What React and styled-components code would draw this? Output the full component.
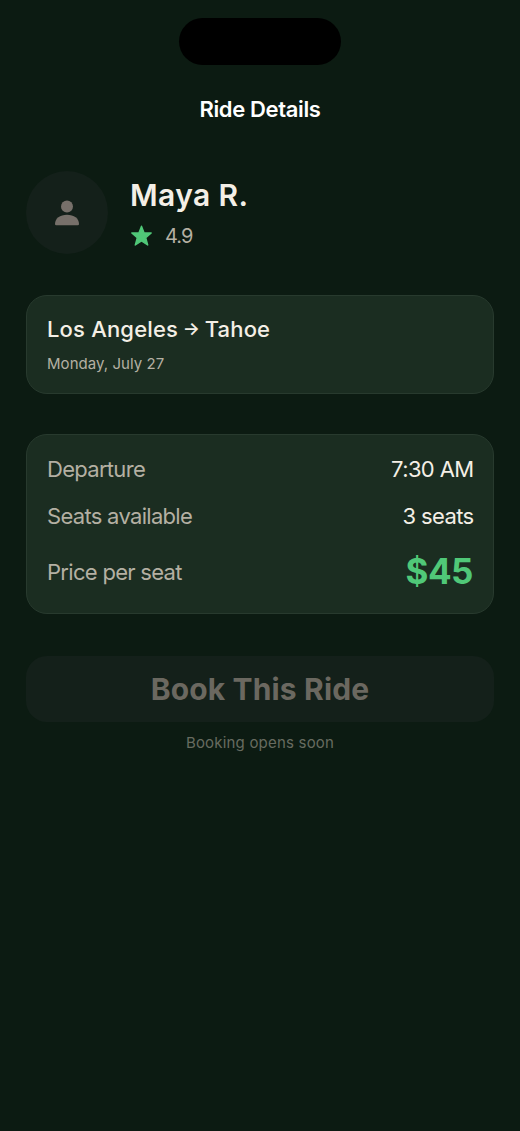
import React from 'react';
import styled, { createGlobalStyle } from 'styled-components';

const Global = createGlobalStyle`
  * { box-sizing: border-box; }
  body { margin: 0; background: #0c1b12; }
`;

const Screen = styled.main`
  width: 520px;
  height: 1131px;
  padding: 18px 26px 0;
  background: #0c1b12;
  color: #f4efe6;
  font-family: Inter, sans-serif;
  display: flex;
  flex-direction: column;
  overflow: hidden;
`;

const Island = styled.div`
  width: 162px;
  height: 47px;
  border-radius: 24px;
  background: #000;
  align-self: center;
`;

const Title = styled.h1`
  margin: 30px 0 0;
  text-align: center;
  font-size: 22px;
  line-height: 28px;
  font-weight: 600;
  letter-spacing: -0.36px;
  color: #fff;
`;

const Driver = styled.section`
  display: flex;
  align-items: center;
  gap: 22px;
  margin-top: 48px;
`;

const Avatar = styled.div`
  width: 82px;
  height: 83px;
  border-radius: 50%;
  background: #14201a;
  display: grid;
  place-items: center;
`;

const DriverName = styled.h2`
  margin: 0;
  font-size: 30px;
  line-height: 38px;
  font-weight: 600;
  letter-spacing: 0.4px;
`;

const Rating = styled.div`
  display: flex;
  align-items: center;
  gap: 12px;
  margin-top: 9px;
  font-size: 20px;
  line-height: 26px;
  letter-spacing: -0.9px;
  color: #b4b0a3;
`;

const Card = styled.section`
  border: 1px solid #283a2e;
  border-radius: 21px;
  background: #1b2d21;
  padding: 20px;
`;

const RouteCard = styled(Card)`
  height: 99px;
  padding-top: 19px;
  margin-top: 41px;
`;

const Route = styled.h3`
  display: flex;
  align-items: center;
  margin: 0;
  font-size: 22px;
  line-height: 28px;
  font-weight: 500;
  letter-spacing: 0.18px;
`;

const Arrow = styled.span`
  width: 26.5px;
  text-align: center;
  font-size: 18px;
  font-weight: 600;
`;

const RideDate = styled.p`
  margin: 11px 0 0;
  font-size: 15px;
  line-height: 20px;
  letter-spacing: 0.05px;
  color: #b4b0a3;
`;

const DetailsCard = styled(Card)`
  height: 180px;
  margin-top: 40px;
`;

const Row = styled.div`
  display: flex;
  justify-content: space-between;
  align-items: center;
  height: ${({ $height }) => $height}px;
`;

const Label = styled.span`
  font-size: 22px;
  letter-spacing: -0.7px;
  color: #b4b0a3;
`;

const Value = styled.span`
  font-size: 22px;
  letter-spacing: -0.6px;
  margin-right: -0.6px;
`;

const Price = styled.strong`
  padding-bottom: 2px;
  font-size: 35px;
  font-weight: 700;
  letter-spacing: -0.5px;
  color: #50c878;
`;

const BookButton = styled.button`
  height: 66px;
  margin-top: 42px;
  border: 0;
  border-radius: 21px;
  background: #14201a;
  color: #6b6860;
  font: 700 30px/38px Inter, sans-serif;
  letter-spacing: 0.15px;
`;

const Note = styled.p`
  margin: 10px 0 0;
  text-align: center;
  font-size: 15px;
  line-height: 22px;
  letter-spacing: 0.2px;
  color: #676b60;
`;

export default function App() {
  return (
    <Screen>
      <Global />
      <Island />
      <Title>Ride Details</Title>
      <Driver>
        <Avatar>
          <svg width="24" height="26" viewBox="0 0 24 26" fill="#77706a">
            <circle cx="12" cy="6.5" r="6" />
            <path d="M0 24C0 18.5 5 14.8 12 14.8S24 18.5 24 24Q24 25.3 22.7 25.3H1.3Q0 25.3 0 24Z" />
          </svg>
        </Avatar>
        <div>
          <DriverName>Maya R.</DriverName>
          <Rating>
            <svg
              width="23"
              height="22"
              viewBox="0 0 23 22"
              fill="#50c878"
              stroke="#50c878"
              strokeWidth="1.4"
              strokeLinejoin="round"
            >
              <path d="M11.5 1.2 14.1 8H21.2L15.7 12.7 17.7 20 11.5 16 5.3 20 7.3 12.7 1.8 8H8.9Z" />
            </svg>
            <span>4.9</span>
          </Rating>
        </div>
      </Driver>
      <RouteCard>
        <Route>
          <span>Los Angeles</span>
          <Arrow>→</Arrow>
          <span>Tahoe</span>
        </Route>
        <RideDate>Monday, July 27</RideDate>
      </RouteCard>
      <DetailsCard>
        <Row $height={28}><Label>Departure</Label><Value>7:30 AM</Value></Row>
        <Row $height={66}><Label>Seats available</Label><Value>3 seats</Value></Row>
        <Row $height={45}><Label>Price per seat</Label><Price>$45</Price></Row>
      </DetailsCard>
      <BookButton disabled>Book This Ride</BookButton>
      <Note>Booking opens soon</Note>
    </Screen>
  );
}
